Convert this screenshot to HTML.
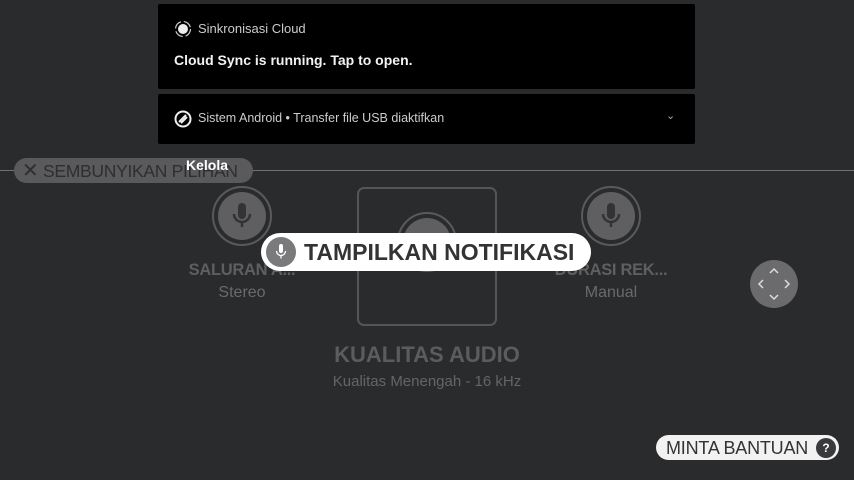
<!DOCTYPE html>
<html><head><style>
body{margin:0;width:854px;height:480px;background:#2a2b2d;position:relative;overflow:hidden;font-family:"Liberation Sans",Roboto,sans-serif}
.a{position:absolute}
.card{background:#000;border-radius:2px;left:158px;width:537px}
.mic{width:60px;height:60px;border:2px solid #5a5a5c;border-radius:50%;box-sizing:border-box}
.mic .in{position:absolute;left:4px;top:4px;width:48px;height:48px;border-radius:50%;background:#5f5f61}
.lbl{color:#5f5f61;font-weight:bold;font-size:16.5px;text-align:center;width:160px;letter-spacing:-0.3px}
.sub{color:#6a6a6c;font-size:16px;text-align:center;width:160px}
</style></head><body>
<div class="a card" style="top:4px;height:85px">
 <svg class="a" style="left:16px;top:16px" width="18" height="18" viewBox="0 0 18 18"><circle cx="9" cy="9" r="7.5" fill="none" stroke="#ccc" stroke-width="1.2" stroke-dasharray="9 3"/><circle cx="9" cy="9" r="5" fill="#eee"/></svg>
 <div class="a" style="left:40px;top:17px;color:#ccc;font-size:13px">Sinkronisasi Cloud</div>
 <div class="a" style="left:16px;top:48px;color:#f2f2f2;font-size:14px;font-weight:bold">Cloud Sync is running. Tap to open.</div>
</div>
<div class="a card" style="top:94px;height:50px">
 <svg class="a" style="left:16px;top:16px" width="18" height="18" viewBox="0 0 18 18"><circle cx="9" cy="9" r="7.5" fill="none" stroke="#eee" stroke-width="2"/><path d="M5 12 L12 5 M7 13 L13 7" stroke="#eee" stroke-width="2"/></svg>
 <div class="a" style="left:40px;top:17px;color:#ccc;font-size:12.5px">Sistem Android • Transfer file USB diaktifkan</div>
 <div class="a" style="left:508px;top:15px;color:#aaa;font-size:11px">⌄</div>
</div>
<div class="a" style="left:0;top:170px;width:854px;height:1px;background:#6f6f71"></div>
<div class="a" style="left:14px;top:158px;width:239px;height:25px;border-radius:13px;background:#5a5a5c;color:#2e2e30;font-size:17.5px;line-height:26px;letter-spacing:-0.3px;white-space:nowrap">
 <span style="margin-left:8px;font-size:20px">✕</span> SEMBUNYIKAN PILIHAN</div>
<div class="a" style="left:186px;top:157px;color:#fff;font-size:14px;font-weight:bold">Kelola</div>
<div class="a mic" style="left:212px;top:186px"><div class="in"></div></div>
<div class="a mic" style="left:581px;top:186px"><div class="in"></div></div>
<div class="a" style="left:357px;top:187px;width:140px;height:139px;border:2px solid #555557;border-radius:7px;box-sizing:border-box"></div>
<div class="a mic" style="left:397px;top:212px"><div class="in"></div></div>
<svg class="a" style="left:228px;top:200px" width="28" height="32" viewBox="0 0 28 32"><rect x="10" y="3" width="8" height="16" rx="4" fill="#333"/><path d="M6 14a8 8 0 0 0 16 0M14 22v5" stroke="#333" stroke-width="2.5" fill="none"/></svg>
<svg class="a" style="left:597px;top:200px" width="28" height="32" viewBox="0 0 28 32"><rect x="10" y="3" width="8" height="16" rx="4" fill="#333"/><path d="M6 14a8 8 0 0 0 16 0M14 22v5" stroke="#333" stroke-width="2.5" fill="none"/></svg>
<div class="a lbl" style="left:162px;top:261px">SALURAN A...</div>
<div class="a sub" style="left:162px;top:284px">Stereo</div>
<div class="a lbl" style="left:531px;top:261px">DURASI REK...</div>
<div class="a sub" style="left:531px;top:284px">Manual</div>
<div class="a" style="left:227px;top:342px;width:400px;text-align:center;color:#5c5c5e;font-weight:bold;font-size:22px">KUALITAS AUDIO</div>
<div class="a" style="left:227px;top:373px;width:400px;text-align:center;color:#656567;font-size:15px">Kualitas Menengah - 16 kHz</div>
<div class="a" style="left:261px;top:233px;width:330px;height:38px;border-radius:19px;background:#fff"></div>
<div class="a" style="left:266px;top:237px;width:30px;height:30px;border-radius:50%;background:#7a7a7c"></div>
<svg class="a" style="left:273px;top:243px" width="16" height="18" viewBox="0 0 16 18"><rect x="6" y="1" width="4" height="9" rx="2" fill="#fff"/><path d="M3.5 8a4.5 4.5 0 0 0 9 0M8 12.5v3" stroke="#fff" stroke-width="1.3" fill="none"/></svg>
<div class="a" style="left:304px;top:239px;color:#333;font-weight:bold;font-size:23px">TAMPILKAN NOTIFIKASI</div>
<div class="a" style="left:750px;top:260px;width:48px;height:48px;border-radius:50%;background:#6b6b6d"></div>
<svg class="a" style="left:750px;top:260px" width="48" height="48" viewBox="0 0 48 48" fill="none" stroke="#ddd" stroke-width="1.5"><path d="M20 13l4-4 4 4M20 35l4 4 4-4M13 20l-4 4 4 4M35 20l4 4-4 4"/></svg>
<div class="a" style="left:656px;top:435px;width:183px;height:25px;border-radius:13px;background:#f2f2f2;color:#333;font-size:18px;line-height:26px;letter-spacing:-0.2px"><span style="margin-left:10px">MINTA BANTUAN</span></div>
<div class="a" style="left:816px;top:438px;width:20px;height:20px;border-radius:50%;background:#3a3a3c;color:#fff;font-size:12px;font-weight:bold;text-align:center;line-height:20px">?</div>
</body></html>
